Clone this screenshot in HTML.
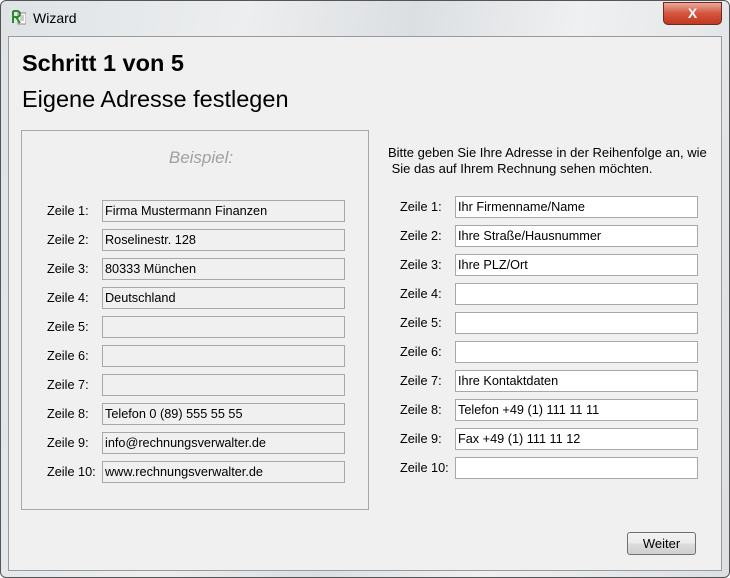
<!DOCTYPE html><html><head><style>
body{margin:0;width:730px;height:578px;overflow:hidden;font-family:"Liberation Sans",sans-serif;}
.win{position:absolute;left:0;top:0;width:728px;height:576px;border:1px solid #555;border-radius:6px;background:linear-gradient(100deg,#dfe3e6,#eceeef 30%,#dcdfe2 50%,#eef0f1 70%,#dde0e3);}
.title{position:absolute;left:33px;top:10px;font-size:14px;color:#000;}
.icon{position:absolute;left:12px;top:10px;width:14px;height:15px;}
.close{position:absolute;left:663px;top:2px;width:57px;height:21px;border:1px solid #6e2a20;border-radius:0 0 5px 5px;background:linear-gradient(#e9a99b,#d5543d 50%,#c0381f);color:#fff;text-align:center;font-weight:bold;font-size:14px;line-height:20px;}
.panel{position:absolute;left:8px;top:36px;width:712px;height:533px;background:#f0f0f0;border:1px solid #9a9a9a;}
.h1{position:absolute;left:22px;top:50px;font-size:23.5px;font-weight:bold;}
.h2{position:absolute;left:22px;top:86px;font-size:23.5px;}
.box{position:absolute;left:21px;top:130px;width:346px;height:378px;border:1px solid #a8a8a8;}
.bsp{position:absolute;top:148px;text-align:center;font-style:italic;color:#a0a0a0;font-size:17px;}
.lab{position:absolute;font-size:12.7px;color:#000;}
.f{position:absolute;height:20px;border:1px solid #a8a8a8;font-size:12.7px;line-height:20px;padding-left:2px;box-sizing:content-box;white-space:nowrap;}
.l{background:#f0f0f0;width:239px;left:102px;}
.r{background:#fff;width:239px;left:455px;}
.info{position:absolute;left:388px;top:145px;font-size:13px;line-height:16px;}
.btn{position:absolute;left:627px;top:532px;width:67px;height:21px;border:1px solid #707070;border-radius:3px;background:linear-gradient(#f2f2f2,#ebebeb 50%,#dddddd 50%,#cfcfcf);font-size:13px;text-align:center;line-height:21px;}
</style></head><body>
<div class="win"></div>
<svg class="icon" viewBox="0 0 14 15"><rect x="6" y="3" width="8" height="11" fill="#fff" stroke="#888"/><path d="M8 6h4M8 8h4M8 10h4" stroke="#999"/><path d="M1 1v12M1 1h4a3 3 0 010 6H1M4 7l4 6" stroke="#2a8a2a" stroke-width="2" fill="none"/></svg>
<div class="title">Wizard</div>
<div class="close">X</div>
<div class="panel"></div>
<div class="h1">Schritt 1 von 5</div>
<div class="h2">Eigene Adresse festlegen</div>
<div class="box"></div>
<div class="bsp" style="left:21px;width:360px">Beispiel:</div>
<div class="info">Bitte geben Sie Ihre Adresse in der Reihenfolge an, wie<br>&nbsp;Sie das auf Ihrem Rechnung sehen möchten.</div>
<div id="rows"></div>
<div class="btn">Weiter</div>
<script>
var L=["Firma Mustermann Finanzen","Roselinestr. 128","80333 München","Deutschland","","","","Telefon 0 (89) 555 55 55","info@rechnungsverwalter.de","www.rechnungsverwalter.de"];
var R=["Ihr Firmenname/Name","Ihre Straße/Hausnummer","Ihre PLZ/Ort","","","","Ihre Kontaktdaten","Telefon +49 (1) 111 11 11","Fax +49 (1) 111 11 12",""];
var h="";
for(var i=0;i<10;i++){
var yl=200+i*29, yr=196+i*29;
h+='<div class="lab" style="left:47px;top:'+(yl+4)+'px">Zeile '+(i+1)+':</div>';
h+='<div class="f l" style="top:'+yl+'px">'+L[i]+'</div>';
h+='<div class="lab" style="left:400px;top:'+(yr+4)+'px">Zeile '+(i+1)+':</div>';
h+='<div class="f r" style="top:'+yr+'px">'+R[i]+'</div>';
}
document.getElementById("rows").innerHTML=h;
</script>
</body></html>
